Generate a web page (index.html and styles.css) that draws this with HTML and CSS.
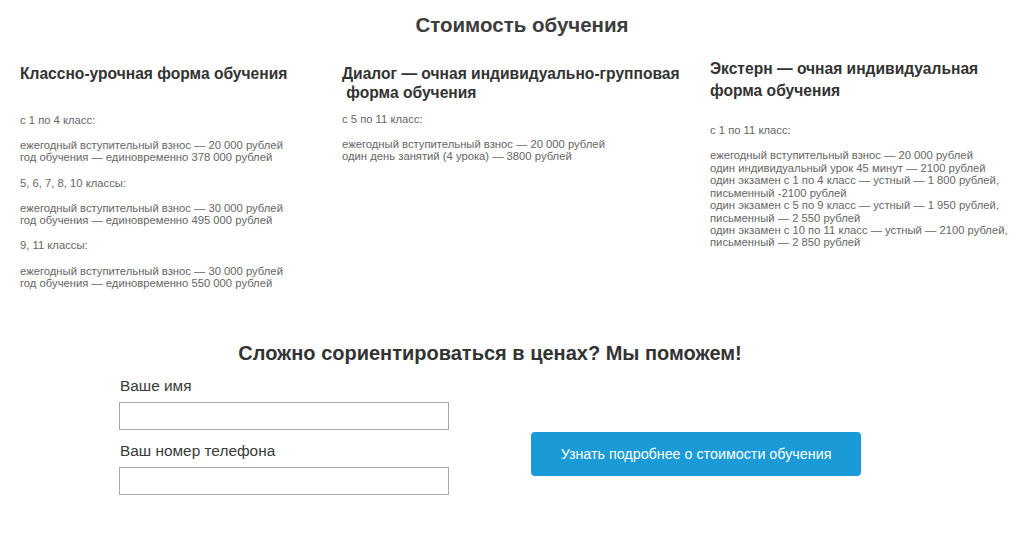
FILE: index.html
```html
<!DOCTYPE html>
<html lang="ru">
<head>
<meta charset="utf-8">
<title>Стоимость обучения</title>
<link rel="stylesheet" href="styles.css">
</head>
<body>
<section class="prices">
  <h1 class="prices-title">Стоимость обучения</h1>
  <div class="cols">
    <div class="col col-1">
      <h3 class="col-title">Классно-урочная форма обучения</h3>
      <p>с 1 по 4 класс:</p>
      <p>ежегодный вступительный взнос — 20 000 рублей<br>год обучения — единовременно 378 000 рублей</p>
      <p>5, 6, 7, 8, 10 классы:</p>
      <p>ежегодный вступительный взнос — 30 000 рублей<br>год обучения — единовременно 495 000 рублей</p>
      <p>9, 11 классы:</p>
      <p>ежегодный вступительный взнос — 30 000 рублей<br>год обучения — единовременно 550 000 рублей</p>
    </div>
    <div class="col col-2">
      <h3 class="col-title">Диалог — очная индивидуально-групповая<br>&nbsp;форма обучения</h3>
      <p>с 5 по 11 класс:</p>
      <p>ежегодный вступительный взнос — 20 000 рублей<br>один день занятий (4 урока) — 3800 рублей</p>
    </div>
    <div class="col col-3">
      <h3 class="col-title">Экстерн — очная индивидуальная<br>форма обучения</h3>
      <p>с 1 по 11 класс:</p>
      <p class="dense">ежегодный вступительный взнос — 20 000 рублей<br>один индивидуальный урок 45 минут — 2100 рублей<br>один экзамен с 1 по 4 класс — устный — 1 800 рублей,<br>письменный -2100 рублей<br>один экзамен с 5 по 9 класс — устный — 1 950 рублей,<br>письменный — 2 550 рублей<br>один экзамен с 10 по 11 класс — устный — 2100 рублей,<br>письменный — 2 850 рублей</p>
    </div>
  </div>
</section>
<section class="help">
  <h2 class="help-title">Сложно сориентироваться в ценах? Мы поможем!</h2>
  <form class="help-form">
    <div class="fields">
      <label class="field-label" for="name">Ваше имя</label>
      <input class="field-input" id="name" type="text">
      <label class="field-label" for="phone">Ваш номер телефона</label>
      <input class="field-input" id="phone" type="tel">
    </div>
    <div class="action">
      <button class="btn" type="button">Узнать подробнее о стоимости обучения</button>
    </div>
  </form>
</section>
</body>
</html>
```
FILE: styles.css
```css
html, body {
  margin: 0;
  padding: 0;
  background: #fff;
}
body {
  font-family: "Liberation Sans", Arial, sans-serif;
  color: #333;
  width: 1024px;
}
.prices {
  padding: 12px 0 0 20px;
}
.prices-title {
  margin: 0;
  font-size: 20.5px;
  line-height: 26px;
  font-weight: bold;
  text-align: center;
  color: #3d3d3d;
}
.cols {
  display: grid;
  grid-template-columns: 322px 368px 1fr;
  margin-top: 26px;
}
.col-title {
  margin: 0 0 31px;
  font-size: 15.6px;
  font-weight: bold;
  line-height: 19px;
  color: #333;
}
.col-2 .col-title {
  margin-bottom: 11px;
}
.col-3 {
  margin-top: -6px;
}
.col-3 .col-title {
  line-height: 22px;
  margin-bottom: 22px;
}
.col p {
  margin: 0 0 13.2px;
  font-size: 11.25px;
  line-height: 12.1px;
  color: #666;
}
.col p.dense {
  line-height: 12.45px;
}
.help {
  width: 742px;
  margin: 39px 0 0 119px;
}
.help-title {
  margin: 0;
  font-size: 20px;
  line-height: 24px;
  font-weight: bold;
  text-align: center;
  color: #333;
}
.help-form {
  display: flex;
  align-items: flex-start;
  justify-content: space-between;
  margin-top: 11px;
}
.fields {
  display: flex;
  flex-direction: column;
  width: 330px;
}
.field-label {
  font-size: 15.4px;
  line-height: 20px;
  color: #3a3a3a;
  margin: 0 0 6px 1px;
}
.field-input {
  box-sizing: border-box;
  width: 330px;
  height: 28px;
  margin: 0 0 11px;
  padding: 0 6px;
  border: 1px solid #aaa;
  border-radius: 0;
  background: #fff;
  font-family: inherit;
  font-size: 14px;
}
.action {
  padding-top: 56px;
}
.btn {
  width: 330px;
  height: 44px;
  border: 0;
  border-radius: 4px;
  background: #1a9bd7;
  color: #fff;
  font-family: "Liberation Sans", Arial, sans-serif;
  font-size: 14.3px;
  cursor: pointer;
}
```
